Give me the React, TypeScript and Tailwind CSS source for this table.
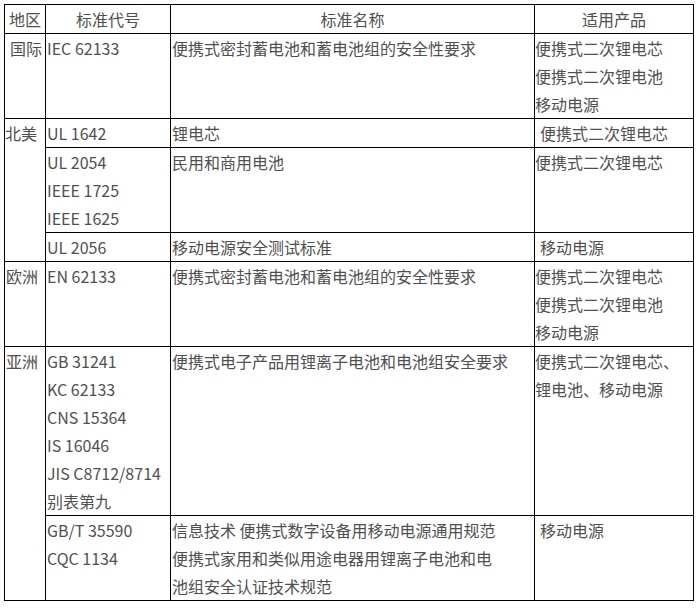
const font = { fontFamily: '"Microsoft YaHei", "Noto Sans CJK SC", "Noto Sans", sans-serif' };

type Row = {
  region?: { name: string; span: number; pad: string };
  codes: string[];
  title: React.ReactNode;
  product: React.ReactNode;
  productPad?: boolean;
  oneLine?: boolean;
};

const rows: Row[] = [
  {
    region: { name: "国际", span: 1, pad: "pl-[5px]" },
    codes: ["IEC 62133"],
    title: "便携式密封蓄电池和蓄电池组的安全性要求",
    product: (
      <>
        便携式二次锂电芯
        <br />
        便携式二次锂电池
        <br />
        移动电源
      </>
    ),
  },
  {
    region: { name: "北美", span: 3, pad: "pl-0" },
    codes: ["UL 1642"],
    title: "锂电芯",
    product: "便携式二次锂电芯",
    productPad: true,
    oneLine: true,
  },
  {
    codes: ["UL 2054", "IEEE 1725", "IEEE 1625"],
    title: "民用和商用电池",
    product: "便携式二次锂电芯",
  },
  {
    codes: ["UL 2056"],
    title: "移动电源安全测试标准",
    product: "移动电源",
    productPad: true,
    oneLine: true,
  },
  {
    region: { name: "欧洲", span: 1, pad: "pl-[1px]" },
    codes: ["EN 62133"],
    title: "便携式密封蓄电池和蓄电池组的安全性要求",
    product: (
      <>
        便携式二次锂电芯
        <br />
        便携式二次锂电池
        <br />
        移动电源
      </>
    ),
  },
  {
    region: { name: "亚洲", span: 2, pad: "pl-[1px]" },
    codes: ["GB 31241", "KC 62133", "CNS 15364", "IS 16046", "JIS C8712/8714", "别表第九"],
    title: "便携式电子产品用锂离子电池和电池组安全要求",
    product: (
      <>
        便携式二次锂电芯、
        <br />
        锂电池、移动电源
      </>
    ),
  },
  {
    codes: ["GB/T 35590", "CQC 1134"],
    title: (
      <>
        信息技术 便携式数字设备用移动电源通用规范
        <br />
        便携式家用和类似用途电器用锂离子电池和电
        <br />
        池组安全认证技术规范
      </>
    ),
    product: "移动电源",
    productPad: true,
  },
];

export default function App() {
  return (
    <div className="bg-white min-h-screen p-[4px]" style={font}>
      <table className="table-fixed border-collapse w-[689px] text-[16px] leading-[28px] text-[#505050]">
        <colgroup>
          <col className="w-[41px]" />
          <col className="w-[125px]" />
          <col className="w-[364px]" />
          <col className="w-[159px]" />
        </colgroup>
        <thead>
          <tr>
            <th className="border border-black font-normal text-center p-0">地区</th>
            <th className="border border-black font-normal text-center p-0">标准代号</th>
            <th className="border border-black font-normal text-center p-0">标准名称</th>
            <th className="border border-black font-normal text-center p-0">适用产品</th>
          </tr>
        </thead>
        <tbody>
          {rows.map((r, i) => {
            const h = r.oneLine ? 28 : Math.max(3, r.codes.length) * 28;
            return (
              <tr key={i} className="align-top">
                {r.region && (
                  <td
                    rowSpan={r.region.span}
                    className={`border border-black p-0 whitespace-nowrap ${r.region.pad}`}
                  >
                    {r.region.name}
                  </td>
                )}
                <td className="border border-black p-0 pl-[1px] whitespace-nowrap" style={{ height: h }}>
                  {r.codes.map((c) => (
                    <div key={c}>{c}</div>
                  ))}
                </td>
                <td className="border border-black p-0 pl-[1px] whitespace-nowrap">{r.title}</td>
                <td className={`border border-black p-0 whitespace-nowrap ${r.productPad ? "pl-[5px]" : "pl-0"}`}>
                  {r.product}
                </td>
              </tr>
            );
          })}
        </tbody>
      </table>
    </div>
  );
}
